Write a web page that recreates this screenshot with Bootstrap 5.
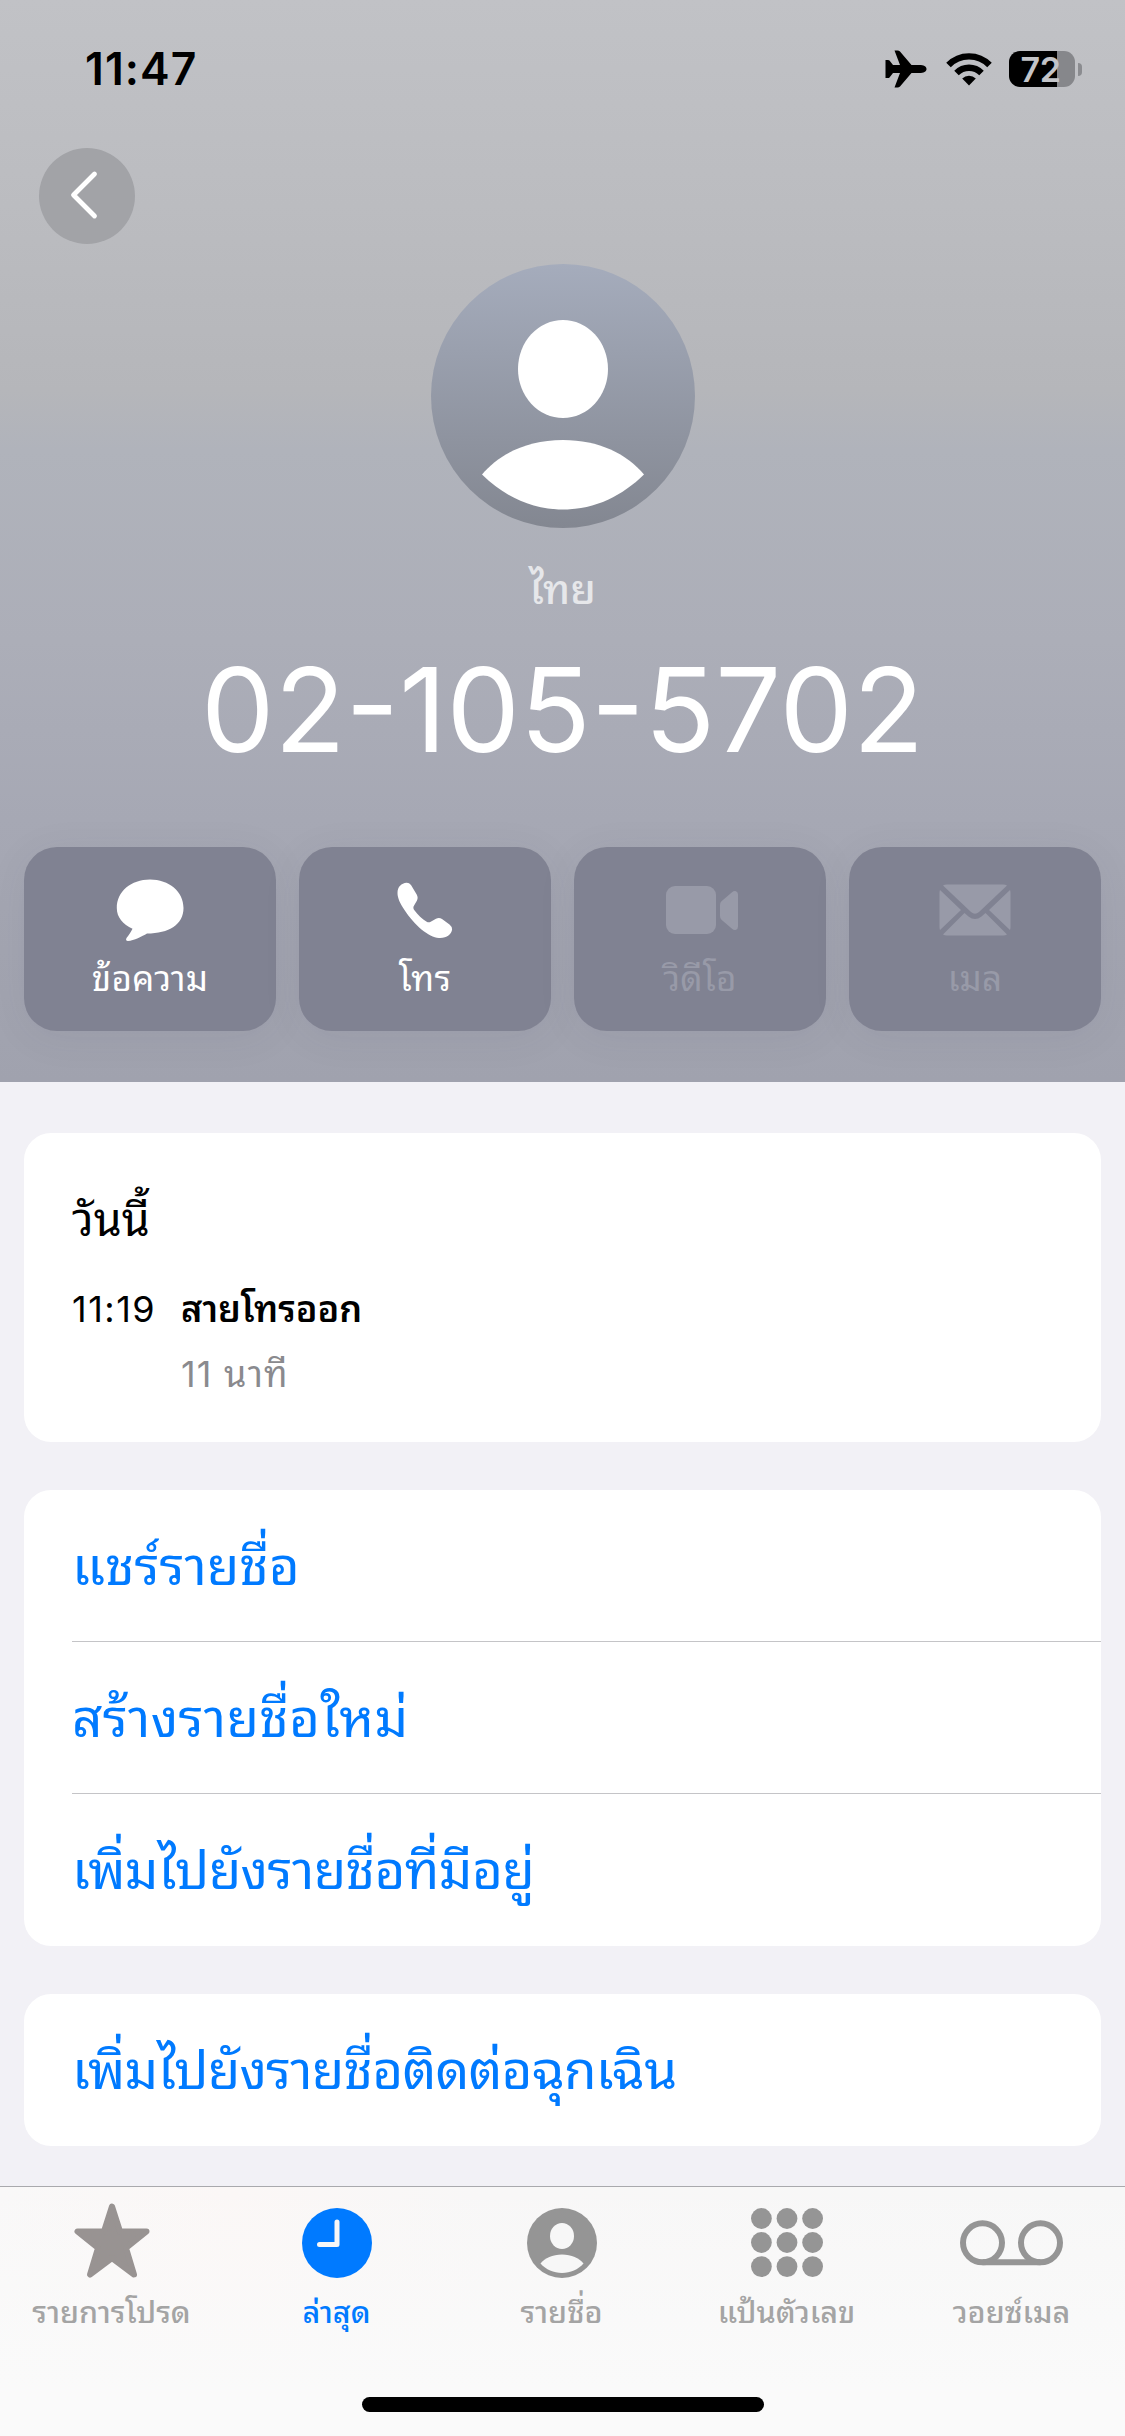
<!DOCTYPE html>
<html lang="th">
<head>
<meta charset="utf-8">
<meta name="viewport" content="width=device-width, initial-scale=1">
<title>02-105-5702</title>
<link href="https://cdn.jsdelivr.net/npm/bootstrap@5.3.0/dist/css/bootstrap.min.css" rel="stylesheet">
<style>
  body { background:#f2f1f6; font-family:Inter,"Noto Sans Thai Looped","Noto Looped Thai","Loma","Waree","Garuda","Noto Sans Thai","Noto Sans",sans-serif; color:#000; height:2436px; overflow:hidden; }
  svg { display:block; flex:none; }
  .screen { width:1125px; height:2436px; }
  .hero { height:1082px; background:linear-gradient(180deg,#c1c2c6 0,#babbbf 240px,#b5b6ba 390px,#b0b3bb 450px,#acaeb8 640px,#a6a8b4 820px,#a0a2ae 1082px); }
  .statusbar { height:148px; padding:40px 43px 0 85px; }
  .clock { font-size:44.5px; font-weight:600; line-height:58px; letter-spacing:1.1px; }
  .status-icons { height:58px; }
  .batt { width:66px; height:36px; border-radius:11px; background:linear-gradient(90deg,#000 48px,#86878b 48px); color:#c3c4c8; font-size:34px; font-weight:600; line-height:37px; letter-spacing:-.5px; padding-right:3px; }
  .batt-tip { width:4px; height:13px; margin-left:3px; border-radius:0 5px 5px 0; background:#8b8c90; }
  .plane { margin-right:18px; }
  .wifi { margin-right:16px; }
  .navrow { height:96px; padding-left:39px; }
  .btn-back { width:96px; height:96px; background:#a2a3a7; padding:0; }
  .portrait { margin-top:20px; }
  .region { margin-top:28px; height:66px; font-size:41px; line-height:66px; font-weight:500; color:#e6e7ea; }
  .phone-no { font-size:116.5px; line-height:132px; margin-top:22px; height:130px; color:#fff; white-space:nowrap; }
  .actions { padding:0 24px; gap:23px; margin-top:73px; }
  .action { height:184px; border:0; border-radius:33px; background:#808292; color:#fff; padding:0; box-shadow:0 6px 40px rgba(60,62,90,.07); font-size:35px; }
  .action:disabled { background:#808292; color:#989aa8; opacity:1; }
  .action .pic { height:80px; margin-top:23px; }
  .action .cap { line-height:44px; height:44px; margin-top:6px; letter-spacing:.2px; }
  .panel { border:0; border-radius:27px; background:#fff; margin:0 24px; }
  .history { height:309px; margin-top:51px; padding:57px 48px 0; }
  .day { font-size:45px; line-height:60px; font-weight:400; }
  .call { font-size:36px; line-height:65px; margin-top:27px; }
  .call-time { width:109px; letter-spacing:1.5px; }
  .call-kind { font-weight:600; }
  .call-len { color:#8a8a8e; letter-spacing:1.2px; }
  .links { margin-top:48px; padding-left:48px; overflow:hidden; }
  .links .list-group-item { height:152px; padding:0; border:0; background:none; font-size:53px; line-height:152px; color:#007aff; white-space:nowrap; }
  .links .list-group-item:not(:last-child) { border-bottom:1px solid #c4c4c7; }
  .links .spaced { letter-spacing:.3px; }
  .links .snug { letter-spacing:-.6px; }
  .links .snugger { letter-spacing:-.8px; }
  .tabbar { margin-top:40px; height:250px; border-top:1px solid #a9a9ad; background:linear-gradient(180deg,rgba(250,250,250,0) 0,#fafafa 200px),linear-gradient(90deg,#f9f8f8 0,#fbf7f6 230px,#f8f7f7 480px,#f7f7f7 1125px); }
  .tabbar .nav-link { padding:16px 2px 0 0; color:#959595; font-size:30.5px; font-weight:500; height:205px; }
  .tabbar .nav-link.active { color:#007aff; }
  .tabbar .glyph { height:80px; }
  .tabbar .tag { line-height:44px; color:#a4a4a4; white-space:nowrap; margin-top:7px; }
  .tabbar .active .tag { color:#007aff; }
  .star { margin-bottom:6px; }
  .homebar { width:402px; height:15px; border-radius:8px; background:#000; margin:5px auto 0; }
</style>
</head>
<body>
<div class="screen d-flex flex-column">
  <header class="hero">
    <div class="statusbar d-flex justify-content-between">
      <div class="clock">11:47</div>
      <div class="status-icons d-flex align-items-center">
        <svg class="plane" width="42" height="38" viewBox="0 0 42 38"><path d="M41.500 19c0-2.600-3-4-7-4h-8L15 1.500Q14 .5 12.500.5H9.500L15 15H8L4.500 10.500Q4 10 3 10H.5V28H3q1 0 1.500-.5L8 23h7L9.500 37.500h3Q14 37.500 15 36.500L26.500 23h8c4 0 7-1.400 7-4z"/></svg>
        <svg class="wifi" width="48" height="36" viewBox="0 0 48 36"><g fill="none" stroke="#000" stroke-width="6.300"><path d="M3.500 14a28.500 28.500 0 0 1 41 0"/><path d="M11.500 22a17.500 17.500 0 0 1 25 0"/></g><path d="M17.200 27.500a10 10 0 0 1 13.600 0L24 34.500z"/></svg>
        <div class="batt text-center">72</div><div class="batt-tip"></div>
      </div>
    </div>
    <div class="navrow">
      <button class="btn-back btn rounded-circle border-0 d-flex" aria-label="ย้อนกลับ">
        <svg width="96" height="96" viewBox="0 0 96 96"><path d="M55.500 26 34.500 47l21 21" fill="none" stroke="#fff" stroke-width="4.800" stroke-linecap="round" stroke-linejoin="round"/></svg>
      </button>
    </div>
    <svg class="portrait mx-auto" width="264" height="264" viewBox="0 0 264 264">
      <defs><linearGradient id="av" x1="0" y1="0" x2="0" y2="1"><stop offset="0" stop-color="#a5acbc"/><stop offset="1" stop-color="#838791"/></linearGradient></defs>
      <circle cx="132" cy="132" r="132" fill="url(#av)"/><ellipse cx="132" cy="105" rx="45" ry="49" fill="#fff"/>
      <path d="M51 210.500C68 190 96 176 132 176s64 14 81 34.500C192 231 165 245.500 132 245.500S72 231 51 210.500z" fill="#fff"/>
    </svg>
    <div class="region text-center">ไทย</div>
    <div class="phone-no text-center">02-105-5702</div>
    <div class="actions d-flex">
      <button class="action w-100 d-flex flex-column align-items-center"><div class="pic d-flex align-items-center"><svg width="68" height="62" viewBox="0 0 68 62"><path d="M34 .5C53 .5 67.500 12.500 67.500 29S53 54.500 31 54.500C26 57.500 18 61.500 12 62c-2 0-2.500-1.800-1.300-3.300 2.500-3 4.300-6 5.800-9C7 45.500.8 38.500.8 29 .8 12.500 15 .5 34 .5z" fill="currentColor"/></svg></div><div class="cap">ข้อความ</div></button>
      <button class="action w-100 d-flex flex-column align-items-center"><div class="pic d-flex align-items-center"><svg width="56" height="56" viewBox="0 0 56 56"><path d="M9.500.7Q12 .5 14 3l5.700 9.500q1.700 3 .3 6l-3.200 5.500q-1 2 .4 4c3.600 5 8 9 12.500 11.700q2 1 4 0l5.300-3q3.200-1.500 6 .3l7.500 5.500q3 2.500 2.500 5.500c-.8 4-4.500 8-12 8C33 56.500 17.500 43.500 7.500 28 3 21.500.5 16 .5 11 .5 4.500 4.500 1.200 9.500.7z" fill="currentColor"/></svg></div><div class="cap">โทร</div></button>
      <button class="action w-100 d-flex flex-column align-items-center" disabled><div class="pic d-flex align-items-center ps-1"><svg width="72" height="48" viewBox="0 0 72 48"><rect width="50" height="48" rx="9" fill="currentColor"/><path d="M54 19q0-2.500 1.500-3.700l10.500-9Q68 4.500 70 5.200 72 6 72 8.500V40.500q0 2.500-2 3.300-2 .7-4-1.100l-10.500-9Q54 32.500 54 30z" fill="currentColor"/></svg></div><div class="cap">วิดีโอ</div></button>
      <button class="action w-100 d-flex flex-column align-items-center" disabled><div class="pic d-flex align-items-center"><svg width="72" height="52" viewBox="0 0 72 52"><g fill="currentColor"><path d="M4 1.500Q5.500.5 8 .5h56q2.500 0 4 1L40 28q-4 3.500-8 0z"/><path d="M.5 9q0-2 .5-3l21 20L1 46Q.5 45 .5 43zM71.500 9q0-2-.5-3L50 26l21 20q.5-1 .5-3z"/><path d="M4 50.500 25.500 29l4 3.500q6.500 5 13 0l4-3.500L68 50.500q-1.500 1-4 1H8q-2.500 0-4-1z"/></g></svg></div><div class="cap">เมล</div></button>
    </div>
  </header>

  <main>
    <section class="panel history">
      <div class="day">วันนี้</div>
      <div class="call d-flex"><div class="call-time">11:19</div><div class="call-info"><div class="call-kind">สายโทรออก</div><div class="call-len">11 นาที</div></div></div>
    </section>
    <nav class="panel links list-group list-group-flush">
      <a class="list-group-item" href="#">แชร์รายชื่อ</a>
      <a class="list-group-item spaced" href="#">สร้างรายชื่อใหม่</a>
      <a class="list-group-item snug" href="#">เพิ่มไปยังรายชื่อที่มีอยู่</a>
    </nav>
    <nav class="panel links list-group list-group-flush"><a class="list-group-item snugger" href="#">เพิ่มไปยังรายชื่อติดต่อฉุกเฉิน</a></nav>
  </main>

  <footer class="tabbar">
    <nav class="nav nav-justified flex-nowrap">
      <a class="nav-link w-100" href="#"><div class="glyph d-flex justify-content-center align-items-center"><svg class="star" width="80" height="78" viewBox="0 0 80 78"><path d="M40 5.500 48 30.500H74.500L54 47 62 73.500 40 57 18 73.500 26 47 5.500 30.500H32z" fill="#989392" stroke="#989392" stroke-width="6" stroke-linejoin="round"/></svg></div><div class="tag">รายการโปรด</div></a>
      <a class="nav-link w-100 active" href="#"><div class="glyph d-flex justify-content-center align-items-center"><svg width="70" height="70" viewBox="0 0 70 70"><circle cx="35" cy="35" r="35" fill="#007aff"/><path d="M35 14v22.500H17.500" fill="none" stroke="#f8f7f7" stroke-width="5" stroke-linecap="round" stroke-linejoin="round"/></svg></div><div class="tag">ล่าสุด</div></a>
      <a class="nav-link w-100" href="#"><div class="glyph d-flex justify-content-center align-items-center"><svg width="70" height="70" viewBox="0 0 70 70"><circle cx="35" cy="35" r="35" fill="currentColor"/><ellipse cx="35" cy="28" rx="12" ry="13" fill="#f7f7f7"/><path d="M13.500 55.500C18 50 25.500 46.500 35 46.500s17 3.500 21.500 9C51 61.500 43.500 65 35 65s-16-3.500-21.500-9.500z" fill="#f7f7f7"/></svg></div><div class="tag">รายชื่อ</div></a>
      <a class="nav-link w-100" href="#"><div class="glyph d-flex justify-content-center align-items-center"><svg width="72" height="70" viewBox="0 0 72 70"><g fill="currentColor"><circle cx="10.400" cy="10.500" r="10.400"/><circle cx="36" cy="10.500" r="10.400"/><circle cx="61.600" cy="10.500" r="10.400"/><circle cx="10.400" cy="34.500" r="10.400"/><circle cx="36" cy="34.500" r="10.400"/><circle cx="61.600" cy="34.500" r="10.400"/><circle cx="10.400" cy="58.600" r="10.400"/><circle cx="36" cy="58.600" r="10.400"/><circle cx="61.600" cy="58.600" r="10.400"/></g></svg></div><div class="tag">แป้นตัวเลข</div></a>
      <a class="nav-link w-100" href="#"><div class="glyph d-flex justify-content-center align-items-center"><svg width="103" height="46" viewBox="0 0 103 46"><g fill="none" stroke="currentColor" stroke-width="6"><circle cx="22.500" cy="22.800" r="19.500"/><circle cx="80.500" cy="22.800" r="19.500"/><path d="M22.500 42.300h58"/></g></svg></div><div class="tag">วอยซ์เมล</div></a>
    </nav>
    <div class="homebar"></div>
  </footer>
</div>
<script src="https://cdn.jsdelivr.net/npm/bootstrap@5.3.0/dist/js/bootstrap.bundle.min.js"></script>
</body>
</html>
